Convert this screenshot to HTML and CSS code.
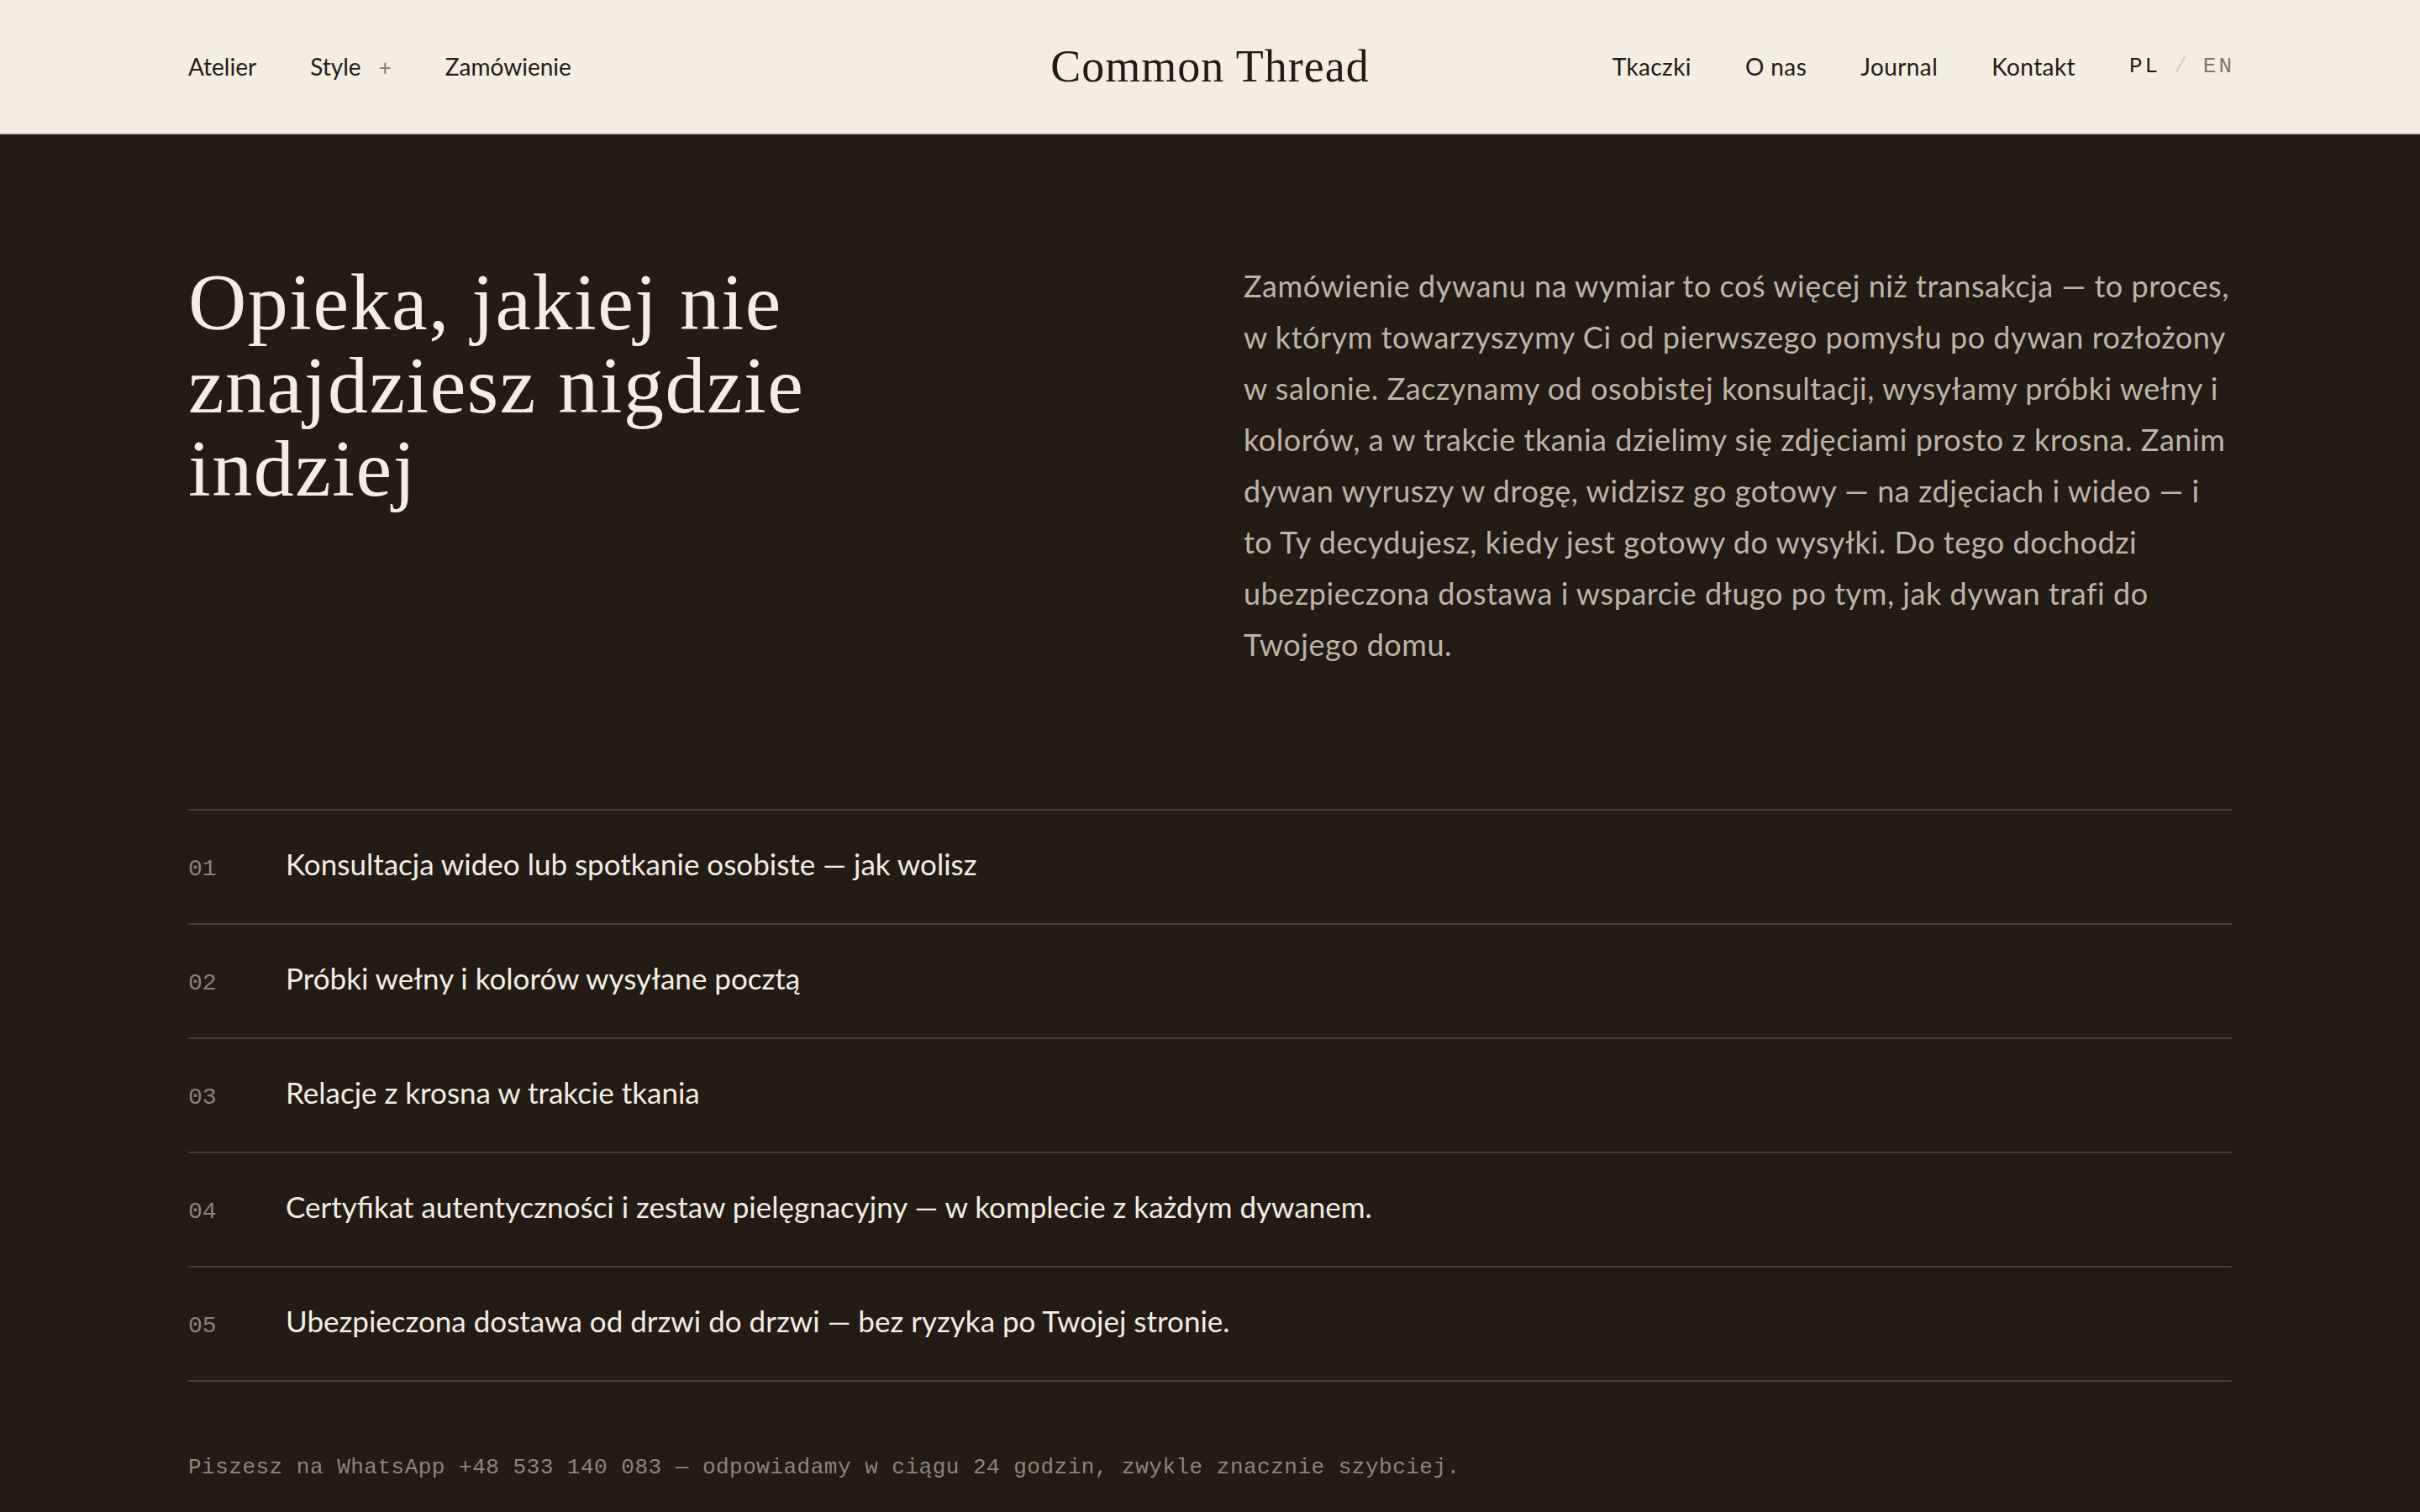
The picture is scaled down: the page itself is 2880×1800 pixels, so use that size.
FILE: index.html
```html
<!DOCTYPE html>
<html lang="pl">
<head>
<meta charset="utf-8">
<title>Common Thread — Opieka</title>
<link rel="stylesheet" href="styles.css">
</head>
<body>
<header class="site-header">
  <nav class="nav nav-left">
    <a class="nav-link" href="#">Atelier</a>
    <a class="nav-link" href="#">Style <span class="plus">+</span></a>
    <a class="nav-link" href="#">Zamówienie</a>
  </nav>
  <a class="logo" href="#">Common Thread</a>
  <nav class="nav nav-right">
    <a class="nav-link" href="#">Tkaczki</a>
    <a class="nav-link" href="#">O nas</a>
    <a class="nav-link" href="#">Journal</a>
    <a class="nav-link" href="#">Kontakt</a>
    <div class="lang">
      <span class="lang-active">PL</span>
      <span class="lang-sep">/</span>
      <span class="lang-other">EN</span>
    </div>
  </nav>
</header>

<main class="care">
  <section class="intro">
    <h1 class="intro-title">Opieka, jakiej nie znajdziesz nigdzie indziej</h1>
    <p class="intro-text">Zamówienie dywanu na wymiar to coś więcej niż transakcja — to proces, w którym towarzyszymy Ci od pierwszego pomysłu po dywan rozłożony w salonie. Zaczynamy od osobistej konsultacji, wysyłamy próbki wełny i kolorów, a w trakcie tkania dzielimy się zdjęciami prosto z krosna. Zanim dywan wyruszy w drogę, widzisz go gotowy — na zdjęciach i wideo — i to Ty decydujesz, kiedy jest gotowy do wysyłki. Do tego dochodzi ubezpieczona dostawa i wsparcie długo po tym, jak dywan trafi do Twojego domu.</p>
  </section>

  <ol class="steps">
    <li class="step"><span class="step-num">01</span><span class="step-text">Konsultacja wideo lub spotkanie osobiste — jak wolisz</span></li>
    <li class="step"><span class="step-num">02</span><span class="step-text">Próbki wełny i kolorów wysyłane pocztą</span></li>
    <li class="step"><span class="step-num">03</span><span class="step-text">Relacje z krosna w trakcie tkania</span></li>
    <li class="step"><span class="step-num">04</span><span class="step-text">Certyfikat autentyczności i zestaw pielęgnacyjny — w komplecie z każdym dywanem.</span></li>
    <li class="step"><span class="step-num">05</span><span class="step-text">Ubezpieczona dostawa od drzwi do drzwi — bez ryzyka po Twojej stronie.</span></li>
  </ol>

  <p class="note">Piszesz na WhatsApp +48 533 140 083 — odpowiadamy w ciągu 24 godzin, zwykle znacznie szybciej.</p>
</main>
</body>
</html>
```

FILE: styles.css
```css
* { box-sizing: border-box; }

html, body {
  margin: 0;
  padding: 0;
}

body {
  background: #231b14;
  font-family: Lato, "Noto Sans", sans-serif;
  color: #f3ece1;
  min-height: 1800px;
}

a { color: inherit; text-decoration: none; }

.site-header {
  height: 160px;
  background: #f4ede2;
  color: #231b14;
  display: grid;
  grid-template-columns: 1fr auto 1fr;
  align-items: center;
  padding: 0 224px;
  border-bottom: 2px solid #d9d0c3;
}

.nav {
  display: flex;
  align-items: center;
  gap: 64px;
}

.nav-right { justify-content: flex-end; }

.nav-link {
  font-size: 28px;
  line-height: 1;
  color: #231b14;
  white-space: nowrap;
}

.nav-right .nav-link { letter-spacing: 0.4px; }

.plus {
  color: #857b70;
  margin-left: 14px;
  font-size: 26px;
}

.logo {
  font-family: "Liberation Serif", serif;
  font-size: 54px;
  letter-spacing: 1px;
  color: #231b14;
}

.lang {
  display: flex;
  align-items: center;
  gap: 16px;
  font-family: "Liberation Mono", monospace;
  font-size: 26px;
  letter-spacing: 3px;
}

.lang-active { color: #231b14; }
.lang-sep { color: #d6cdc0; }
.lang-other { color: #7f766c; margin-right: -3px; }

.care {
  padding: 150px 224px 0;
}

.intro {
  display: grid;
  grid-template-columns: 1fr 1fr;
  gap: 80px;
  align-items: start;
}

.intro-title {
  margin: 0;
  font-family: "Liberation Serif", serif;
  font-weight: 400;
  font-size: 96px;
  line-height: 99px;
  letter-spacing: 1.5px;
  color: #f4ede2;
  max-width: 820px;
}

.intro-text {
  margin: 0;
  font-size: 36px;
  line-height: 61px;
  letter-spacing: 0.55px;
  color: #bfb4a7;
}

.steps {
  list-style: none;
  margin: 165px 0 0;
  padding: 0;
  border-bottom: 2px solid #473e35;
}

.step {
  display: flex;
  align-items: center;
  padding: 35px 0 43px;
  border-top: 2px solid #473e35;
}

.step-num {
  width: 116px;
  flex: none;
  font-family: "Liberation Mono", monospace;
  font-size: 28px;
  color: #8c8278;
  line-height: 42px;
  padding-top: 14px;
}

.step-text {
  font-size: 35px;
  line-height: 56px;
  color: #f4ede2;
}

.note {
  margin: 82px 0 0;
  font-family: "Liberation Mono", monospace;
  font-size: 26px;
  letter-spacing: 0.5px;
  line-height: 40px;
  color: #8f857a;
}
```
